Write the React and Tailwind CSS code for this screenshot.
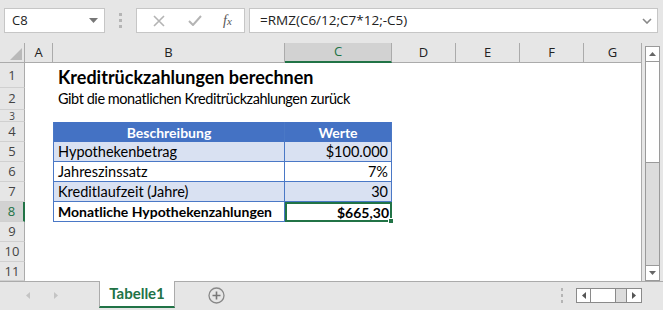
import React from 'react'

const cols = ['A', 'B', 'C', 'D', 'E', 'F', 'G']
const colW = ['w-[28px]', 'w-[232px]', 'w-[107px]', 'w-[64px]', 'w-[64px]', 'w-[64px]', 'w-[57px]']
const rowH = ['h-[25px]', 'h-[22px]', 'h-[12px]', 'h-[20px]', 'h-[20px]', 'h-[20px]', 'h-[20px]', 'h-[20px]', 'h-[20px]', 'h-[20px]', 'h-[19px]']

const table = [
    { label: 'Hypothekenbetrag', value: '$100.000', band: true },
    { label: 'Jahreszinssatz', value: '7%' },
    { label: 'Kreditlaufzeit (Jahre)', value: '30', band: true },
]

function RowHeader({ n }) {
    const active = n === 8
    return (
        <div className={`w-[25px] flex items-center justify-center border-b border-[#d0d0d0] font-['Open_Sans'] ${n === 3 ? 'text-[10px] leading-[10px]' : 'text-[13px] leading-none'} ${active ? 'bg-[#d2d2d2] text-[#217346] border-r-2 border-r-[#217346]' : 'bg-[#e6e6e6] text-[#444] border-r border-r-[#ababab]'} ${rowH[n - 1]}`}>
            {n}
        </div>
    )
}

function SheetRow({ n }) {
    const h = rowH[n - 1]
    let b = <div className="w-[232px]" />
    let c = <div className="w-[107px]" />

    if (n === 1) {
        b = <div className="w-[232px] pl-[5px] pt-[3px] whitespace-nowrap font-bold text-[18px] leading-[22px] text-black">Kreditrückzahlungen berechnen</div>
    }
    if (n === 2) {
        b = <div className="w-[232px] pl-[5px] whitespace-nowrap text-[14.5px] tracking-[-0.45px] leading-[22px] text-black">Gibt die monatlichen Kreditrückzahlungen zurück</div>
    }
    if (n === 4) {
        b = <div className="w-[232px] bg-[#4472c4] border-l border-r border-[#4a78c6] text-white font-bold text-[14px] flex items-center justify-center">Beschreibung</div>
        c = <div className="w-[107px] bg-[#4472c4] border-r border-[#4a78c6] text-white font-bold text-[14px] flex items-center justify-center">Werte</div>
    }
    if (n >= 5 && n <= 7) {
        const r = table[n - 5]
        const bg = r.band ? 'bg-[#d9e1f2]' : 'bg-white'
        b = <div className={`w-[232px] ${bg} border-l border-r border-b border-[#4a78c6] text-[14.5px] pl-[4px] flex items-center`}>{r.label}</div>
        c = <div className={`w-[107px] ${bg} border-r border-b border-[#4a78c6] text-[14.5px] pr-[3px] flex items-center justify-end`}>{r.value}</div>
    }
    if (n === 8) {
        b = <div className="w-[232px] border-l border-r border-b border-[#4a78c6] font-bold text-[14px] pl-[4px] flex items-center">Monatliche Hypothekenzahlungen</div>
        c = (
            <div className="relative w-[107px] border-2 border-[#217346] font-bold text-[14px] pr-[1px] flex items-center justify-end">
                $665,30
                <span className="absolute right-[-4px] bottom-[-4px] w-[6px] h-[6px] bg-[#217346] border border-white" />
            </div>
        )
    }

    return (
        <div className={`flex ${h}`}>
            <RowHeader n={n} />
            <div className="w-[28px]" />
            {b}
            {c}
            <div className="flex-1" />
        </div>
    )
}

export default function App() {
    return (
        <div className="w-[663px] h-[310px] bg-[#e6e6e6] overflow-hidden flex flex-col text-black" style={{ fontFamily: 'Lato, "Open Sans", sans-serif' }}>

            {/* formula bar */}
            <div className="h-[43px] flex items-start pt-[8px] pl-[4px]" >
                <div className="w-[101px] h-[25px] bg-white border border-[#c6c6c6] flex items-center justify-between pl-[7px] pr-[6px] text-[13px] text-[#222] font-['Open_Sans']">
                    <span>C8</span>
                    <svg width="9" height="5" viewBox="0 0 9 5"><path d="M0 0h9L4.5 5z" fill="#777" /></svg>
                </div>
                <div className="w-[31px] h-[25px] flex flex-col items-center justify-center gap-[3px]">
                    <span className="w-[3px] h-[3px] bg-[#b5b5b5]" />
                    <span className="w-[3px] h-[3px] bg-[#b5b5b5]" />
                    <span className="w-[3px] h-[3px] bg-[#b5b5b5]" />
                </div>
                <div className="w-[109px] h-[25px] bg-white border border-[#c6c6c6] flex items-center pl-[16px]">
                    <svg width="12" height="12" viewBox="0 0 12 12"><path d="M1 1l10 10M11 1L1 11" stroke="#b4b4b4" strokeWidth="1.6" /></svg>
                    <svg className="ml-[23px]" width="14" height="11" viewBox="0 0 14 11"><path d="M1 6l4 4 8-9" stroke="#b4b4b4" strokeWidth="2" fill="none" /></svg>
                    <span className="ml-[21px] italic text-[14px] text-[#555] font-['Liberation_Serif']">f<span className="text-[11px]">x</span></span>
                </div>
                <div className="ml-[4px] w-[409px] h-[25px] bg-white border border-[#c6c6c6] flex items-center justify-between pl-[10px] pr-[5px] text-[13.5px] text-[#222] font-['Open_Sans']">
                    <span>=RMZ(C6/12;C7*12;-C5)</span>
                    <svg width="10" height="6" viewBox="0 0 10 6"><path d="M1 1l4 4 4-4" stroke="#888" strokeWidth="1.6" fill="none" /></svg>
                </div>
            </div>

            {/* sheet */}
            <div className="flex h-[238px]">
                <div className="w-[642px] bg-white flex flex-col border-r border-[#ababab]">
                    <div className="flex h-[20px] bg-[#e6e6e6]">
                        <div className="w-[25px] border-r border-b border-[#ababab] flex items-end justify-end p-[2px]">
                            <svg width="12" height="12" viewBox="0 0 12 12"><path d="M12 0v12H0z" fill="#b9b9b9" /></svg>
                        </div>
                        {cols.map((c, i) => (
                            <div key={c} className={`${colW[i]} flex items-center justify-center text-[13px] font-['Open_Sans'] ${c === 'C' ? 'bg-[#d2d2d2] text-[#217346] border-b-2 border-[#217346] border-r border-r-[#ababab]' : 'text-[#222] border-r border-b border-[#ababab]'} ${i === 6 ? 'border-r-0 flex-1' : ''}`}>
                                {c}
                            </div>
                        ))}
                    </div>
                    {rowH.map((_, i) => <SheetRow key={i} n={i + 1} />)}
                </div>

                {/* vertical scrollbar */}
                <div className="flex-1 pt-[3px] pl-[3px]">
                    <div className="w-[15px] h-[235px] flex flex-col border border-[#9a9a9a] bg-[#dcdcdc]">
                        <div className="h-[15px] bg-white border-b border-[#9a9a9a] flex items-center justify-center">
                            <svg width="7" height="4" viewBox="0 0 7 4"><path d="M0 4h7L3.5 0z" fill="#666" /></svg>
                        </div>
                        <div className="h-[101px] bg-white border-b border-[#9a9a9a]" />
                        <div className="flex-1" />
                        <div className="h-[15px] bg-white border-t border-[#9a9a9a] flex items-center justify-center">
                            <svg width="7" height="4" viewBox="0 0 7 4"><path d="M0 0h7L3.5 4z" fill="#666" /></svg>
                        </div>
                    </div>
                </div>
            </div>

            {/* sheet tabs */}
            <div className="flex-1 flex items-start border-t border-[#ababab] relative">
                <div className="w-[99px] h-[26px] flex items-center pl-[26px] gap-[24px]">
                    <svg width="4" height="7" viewBox="0 0 4 7"><path d="M4 0v7L0 3.5z" fill="#c4c4c4" /></svg>
                    <svg width="4" height="7" viewBox="0 0 4 7"><path d="M0 0v7l4-3.5z" fill="#c4c4c4" /></svg>
                </div>
                <div className="w-[76px] h-[27px] mt-[-1px] bg-white border-l border-r border-[#ababab] border-b-2 border-b-[#217346] flex items-center justify-center font-bold text-[15px] text-[#217346]">
                    Tabelle1
                </div>
                <div className="ml-[33px] h-[26px] flex items-center">
                    <svg width="17" height="17" viewBox="0 0 17 17"><circle cx="8.5" cy="8.5" r="7.5" stroke="#888" strokeWidth="1.3" fill="none" /><path d="M8.5 4.5v8M4.5 8.5h8" stroke="#777" strokeWidth="1.6" /></svg>
                </div>
                <div className="ml-auto mr-[21px] h-[26px] flex items-center">
                    <div className="flex flex-col gap-[3px] mr-[13px]">
                        <span className="w-[2px] h-[3px] bg-[#b5b5b5]" />
                        <span className="w-[2px] h-[3px] bg-[#b5b5b5]" />
                        <span className="w-[2px] h-[3px] bg-[#b5b5b5]" />
                    </div>
                    <div className="flex h-[15px] border border-[#8a8a8a] bg-[#dcdcdc]">
                        <div className="w-[14px] bg-white border-r border-[#8a8a8a] flex items-center justify-center">
                            <svg width="4" height="7" viewBox="0 0 4 7"><path d="M4 0v7L0 3.5z" fill="#555" /></svg>
                        </div>
                        <div className="w-[25px] bg-white border-r border-[#8a8a8a]" />
                        <div className="w-[10px]" />
                        <div className="w-[15px] bg-white border-l border-[#8a8a8a] flex items-center justify-center">
                            <svg width="4" height="7" viewBox="0 0 4 7"><path d="M0 0v7l4-3.5z" fill="#555" /></svg>
                        </div>
                    </div>
                </div>
            </div>
        </div>
    )
}
